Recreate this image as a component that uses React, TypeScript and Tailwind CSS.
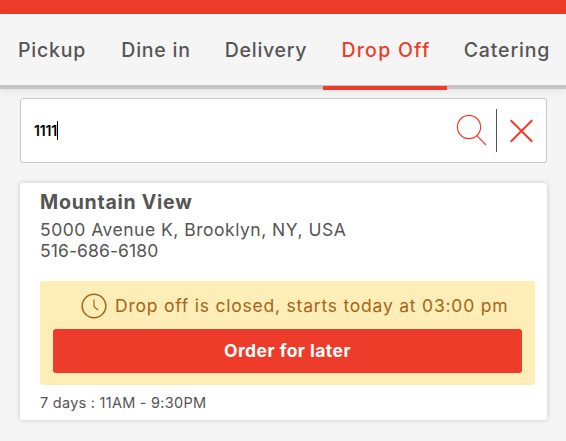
import { useState } from 'react';
import clsx from 'clsx';

const tabs = [
  { label: 'Pickup', width: 'w-[104px]', tracking: 'tracking-[0.8px]' },
  { label: 'Dine in', width: 'w-[104px]', tracking: 'tracking-[0.75px]' },
  { label: 'Delivery', width: 'w-[115px] pl-px', tracking: 'tracking-[0.7px]' },
  { label: 'Drop Off', width: 'w-[124px] pl-0.5', tracking: 'tracking-[1.25px]' },
  { label: 'Catering', width: 'w-[119px] pl-px', tracking: 'tracking-[0.85px]' },
];

const SearchIcon = () => (
  <svg width="32" height="33" viewBox="0 0 32 33" fill="none" stroke="#ee3c2a" strokeWidth="1.2">
    <circle cx="13" cy="13" r="11.6" />
    <path d="M20.8 21.6 30 31" />
  </svg>
);

const CloseIcon = () => (
  <svg width="24" height="24" viewBox="0 0 24 24" fill="none" stroke="#ee3c2a" strokeWidth="2">
    <path d="M1.7 1.2 23.2 22.8M23.2 1.2 1.7 22.8" />
  </svg>
);

const ClockIcon = () => (
  <svg width="26" height="26" viewBox="0 0 26 26" fill="none" stroke="#a56516" strokeWidth="1.5">
    <circle cx="13" cy="13" r="11.8" />
    <path d="M13 6.5V12.5Q13 13.8 14 14.5L17.2 17" strokeWidth="1.2" />
  </svg>
);

const App = () => {
  const [active, setActive] = useState('Drop Off');

  return (
    <div className="h-[441px] w-[566px] overflow-hidden bg-[#f5f5f5] font-[Inter,sans-serif] text-[#555555]">
      {/* Header */}
      <div className="h-3.5 bg-[#ee3c2a]" />
      <nav className="relative flex h-[75px] border-b-4 border-[#c4c4c4] shadow-[0_2px_8px_rgba(0,0,0,0.08)]">
        {tabs.map(({ label, width, tracking }) => (
          <button
            key={label}
            onClick={() => setActive(label)}
            className={clsx(
              'h-[76px] shrink-0 whitespace-nowrap text-center text-[19.5px] font-medium',
              width,
              tracking,
              active === label ? 'border-b-4 border-[#ee3c2a] pt-0.5 text-[#ee3c2a]' : 'pb-0.5',
            )}
          >
            {label}
          </button>
        ))}
      </nav>

      <main className="pl-5 pr-[19px] pt-[9px]">
        {/* Search */}
        <div className="flex h-[65px] items-center rounded-[3px] border border-[#c8c8c8] bg-white pl-[13px] pr-[13px]">
          <span className="text-sm font-semibold tracking-[-0.2px] text-black">1111</span>
          <span className="h-[19px] w-px bg-black" />
          <div className="ml-auto flex items-center">
            <SearchIcon />
            <span className="ml-2 mr-[12px] h-[43px] w-px bg-[#555555]" />
            <CloseIcon />
          </div>
        </div>

        {/* Location */}
        <section className="mt-5 h-[237px] rounded-[3px] bg-white pl-5 pr-3 pt-[7px] shadow-[0_0_5px_rgba(0,0,0,0.2)]">
          <h2 className="text-[19.5px] font-bold leading-6 tracking-[0.75px]">Mountain View</h2>
          <p className="mt-[5px] text-[17.5px] leading-[21px] tracking-[0.5px]">5000 Avenue K, Brooklyn, NY, USA</p>
          <p className="text-[17.5px] leading-[21px] tracking-[0.1px]">516-686-6180</p>

          <div className="mt-5 h-[104px] rounded-[3px] bg-[#fdedb6] px-[13px] pt-3">
            <div className="flex h-[26px] items-center gap-[8px] whitespace-nowrap pl-7 text-[17.5px] tracking-[0.78px] text-[#a56516]">
              <ClockIcon />
              <span>Drop off is closed, starts today at 03:00 pm</span>
            </div>
            <button className="mt-2.5 h-11 w-full rounded-[3px] bg-[#ee3c2a] text-[17.5px] font-bold tracking-[0.45px] text-white">
              Order for later
            </button>
          </div>
          <p className="mt-2 text-[14.5px] leading-5 tracking-[0.26px]">7 days : 11AM - 9:30PM</p>
        </section>
      </main>
    </div>
  );
};

export default App;
